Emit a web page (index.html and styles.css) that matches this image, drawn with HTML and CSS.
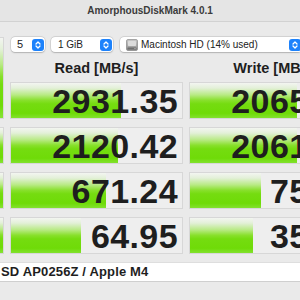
FILE: index.html
```html
<!DOCTYPE html>
<html>
<head>
<meta charset="utf-8">
<link rel="stylesheet" href="styles.css">
</head>
<body>
<div class="titlebar">AmorphousDiskMark 4.0.1</div>
<div class="main">
  <div class="cell side side-all"><div class="bar full"></div></div>
  <div class="toolbar">
    <div class="popup p-count"><span class="label">5</span><span class="stepper"><svg width="12" height="12" viewBox="0 0 12 12"><path d="M4 5 6 3 8 5M4 7 6 9 8 7" fill="none" stroke="#fff" stroke-width="1.3" stroke-linecap="round" stroke-linejoin="round"/></svg></span></div>
    <div class="popup p-size"><span class="label">1 GiB</span><span class="stepper"><svg width="12" height="12" viewBox="0 0 12 12"><path d="M4 5 6 3 8 5M4 7 6 9 8 7" fill="none" stroke="#fff" stroke-width="1.3" stroke-linecap="round" stroke-linejoin="round"/></svg></span></div>
    <div class="popup p-disk"><svg class="disk" width="12" height="12" viewBox="0 0 12 12"><defs><linearGradient id="dg" x1="0" y1="0" x2="0" y2="1"><stop offset="0" stop-color="#c9c9c9"/><stop offset="1" stop-color="#8e8e8e"/></linearGradient></defs><rect x="0.5" y="0.5" width="11" height="11" rx="1.5" fill="url(#dg)" stroke="#7a7a7a" stroke-width="0.6"/><rect x="2" y="2" width="8" height="5" rx="0.8" fill="#dcdcdc"/><rect x="1.5" y="8.5" width="9" height="2" rx="0.5" fill="#6f6f6f"/><circle cx="9" cy="9.5" r="0.6" fill="#cfcfcf"/></svg><span class="label">Macintosh HD (14% used)</span><span class="stepper"><svg width="12" height="12" viewBox="0 0 12 12"><path d="M4 5 6 3 8 5M4 7 6 9 8 7" fill="none" stroke="#fff" stroke-width="1.3" stroke-linecap="round" stroke-linejoin="round"/></svg></span></div>
  </div>
  <div class="head h-read">Read [MB/s]</div>
  <div class="head h-write">Write [MB/s]</div>

  <div class="cell side r1"><div class="bar full"></div></div>
  <div class="cell side r2"><div class="bar full"></div></div>
  <div class="cell side r3"><div class="bar full"></div></div>

  <div class="cell read r0"><div class="bar" style="width:110px"></div><div class="value">2931.35</div></div>
  <div class="cell write r0"><div class="bar" style="width:107px"></div><div class="value">2065.64</div></div>
  <div class="cell read r1"><div class="bar" style="width:107px"></div><div class="value">2120.42</div></div>
  <div class="cell write r1"><div class="bar" style="width:107px"></div><div class="value">2061.56</div></div>
  <div class="cell read r2"><div class="bar" style="width:95px"></div><div class="value">671.24</div></div>
  <div class="cell write r2"><div class="bar" style="width:71px"></div><div class="value">75.35</div></div>
  <div class="cell read r3"><div class="bar" style="width:70px"></div><div class="value">64.95</div></div>
  <div class="cell write r3"><div class="bar" style="width:63px"></div><div class="value">35.23</div></div>
</div>
<div class="status">SD AP0256Z / Apple M4</div>
</body>
</html>
```
FILE: styles.css
```css
* { box-sizing: border-box; margin: 0; padding: 0; }
html, body { width: 300px; height: 300px; overflow: hidden; }
body {
  background: #eaeaea;
  font-family: "Liberation Sans", Arial, sans-serif;
  color: #1e1e1e;
}
.titlebar {
  height: 22px;
  background: #e5e5e5;
  border-bottom: 1px solid #d2d2d2;
  text-align: center;
  font-weight: bold;
  font-size: 10px;
  line-height: 21px;
  color: #3b3b3b;
  white-space: nowrap;
}
.main {
  display: grid;
  grid-template-columns: 40px 173px 173px;
  grid-template-rows: 15px 14px repeat(4, 37px);
  column-gap: 6px;
  row-gap: 8px;
  margin: 15px 0 0 -36px;
}
.toolbar {
  grid-column: 2 / 4;
  grid-row: 1;
  display: flex;
  padding-left: 1px;
}
.popup {
  height: 15px;
  background: #fff;
  border-radius: 4px;
  box-shadow: 0 0 0 0.5px rgba(0,0,0,0.14), 0 0.5px 1.5px rgba(0,0,0,0.18);
  display: flex;
  align-items: center;
  font-size: 10px;
  line-height: 15px;
  color: #222;
  padding-right: 1px;
  white-space: nowrap;
  flex: none;
}
.popup .label { flex: 1; }
.p-count { width: 34px; padding-left: 6px; font-size: 11px; }
.p-size { width: 62px; padding-left: 7px; margin-left: 6px; }
.p-disk { width: 182px; padding-left: 6px; margin-left: 7px; }
.disk { margin-right: 3px; flex: none; }
.stepper {
  width: 12px;
  height: 12px;
  border-radius: 3px;
  background: #1d82fb;
  display: grid;
  place-items: center;
  flex: none;
}
.stepper svg { display: block; }
.head {
  grid-row: 2;
  font-size: 14.5px;
  font-weight: bold;
  line-height: 16px;
  text-align: center;
  white-space: nowrap;
  color: #1e1e1e;
}
.h-read { grid-column: 2; }
.h-write { grid-column: 3; }
.cell {
  background: #eeeeee;
  border: 1px solid #d7d7d7;
  display: grid;
  overflow: hidden;
}
.cell > * { grid-area: 1 / 1; }
.side { grid-column: 1; }
.side-all { grid-row: 1 / 4; }
.read { grid-column: 2; }
.write { grid-column: 3; }
.r0 { grid-row: 3; }
.r1 { grid-row: 4; }
.r2 { grid-row: 5; }
.r3 { grid-row: 6; }
.bar {
  justify-self: start;
  height: 100%;
  background: linear-gradient(180deg, #f3f5f1 0%, #e3f0d8 14%, #b8ea84 33%, #88e02c 48%, #75dc10 58%, #6fdb08 84%, #86e336 100%);
}
.bar.full { width: 100%; }
.value {
  justify-self: end;
  font-size: 34px;
  font-weight: bold;
  letter-spacing: 0.4px;
  line-height: 36px;
  padding-right: 4px;
  white-space: nowrap;
  color: #1e1e1e;
}
.status {
  margin-top: 8px;
  height: 20px;
  background: #fff;
  border-top: 1px solid #dedede;
  border-bottom: 1px solid #cfcfcf;
  font-weight: bold;
  font-size: 13px;
  letter-spacing: 0.15px;
  line-height: 18px;
  padding-left: 1px;
  white-space: nowrap;
  color: #1e1e1e;
}
```
